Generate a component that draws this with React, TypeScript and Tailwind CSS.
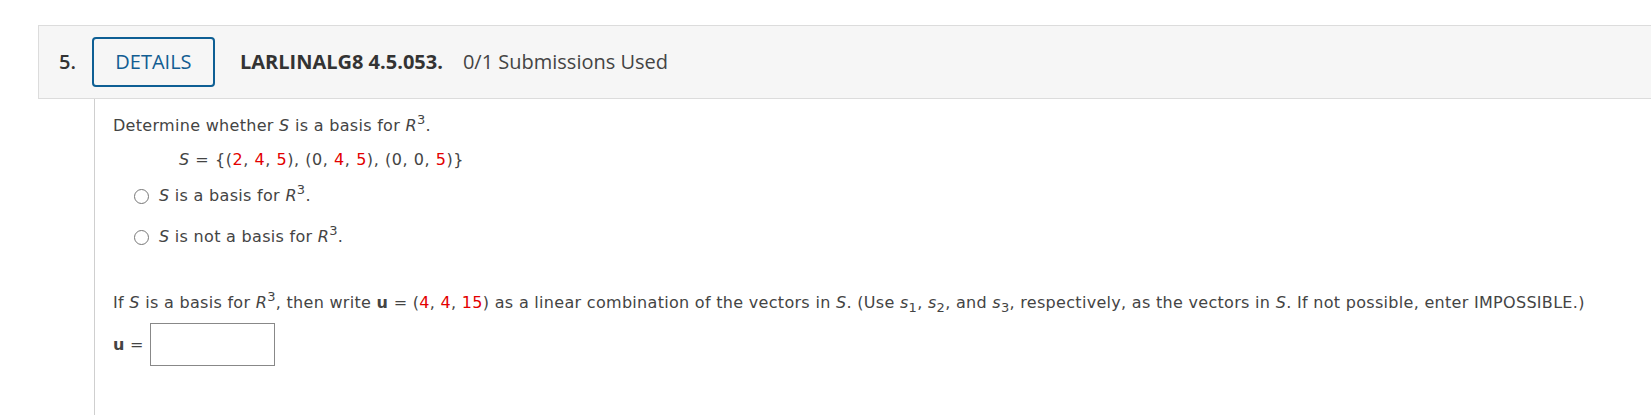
import React from "react";

const sans = "font-['Open_Sans','Noto_Sans',sans-serif]";
const body = "font-['DejaVu_Sans','Verdana',sans-serif]";

function R({ children }: { children: React.ReactNode }) {
  return <span className="text-[#e30000]">{children}</span>;
}

function I({ children }: { children: React.ReactNode }) {
  return <i>{children}</i>;
}

function R3() {
  return (
    <>
      <I>R</I>
      <sup className="relative -top-[7px] text-[13px]">3</sup>
    </>
  );
}

function Sub({ n }: { n: number }) {
  return (
    <>
      <I>s</I>
      <sub className="relative -bottom-[4px] text-[13px]">{n}</sub>
    </>
  );
}

function Radio({ children }: { children: React.ReactNode }) {
  return (
    <label className="flex items-center gap-[10px]">
      <span className="block h-[15px] w-[15px] rounded-full border border-[#777] bg-white" />
      <span>{children}</span>
    </label>
  );
}

export default function App() {
  return (
    <div className="min-h-[415px] bg-white pt-[25px] pl-[38px]">
      <div
        className={`${sans} flex h-[74px] items-center border border-r-0 border-[#dcdcdc] bg-[#f6f6f6] pl-[20px] text-[20px] text-[#333]`}
      >
        <span className="font-semibold">5.</span>
        <button className="ml-[16px] flex h-[50px] w-[123px] items-center justify-center rounded-[4px] border-2 border-[#0e5f94] text-[20px] font-medium text-[#125d92]">
          DETAILS
        </button>
        <span className="ml-[25px] font-bold text-[#333]">LARLINALG8 4.5.053.</span>
        <span className="ml-[20px] text-[#444]">0/1 Submissions Used</span>
      </div>

      <div
        className={`${body} ml-[56px] min-h-[320px] border-l border-[#cfcfcf] pl-[18px] pt-[17px] text-[16px] tracking-[0.3px] text-[#444]`}
      >
        <p className="leading-[20px]">
          Determine whether <I>S</I> is a basis for <R3 />.
        </p>
        <p className="mt-[14px] pl-[66px] leading-[20px] tracking-[0.55px]">
          <I>S</I> = {"{"}(<R>2</R>, <R>4</R>, <R>5</R>), (0, <R>4</R>, <R>5</R>), (0, 0, <R>5</R>){"}"}
        </p>
        <div className="mt-[16px] flex flex-col gap-[21px] pl-[21px] leading-[20px]">
          <Radio>
            <I>S</I> is a basis for <R3 />.
          </Radio>
          <Radio>
            <I>S</I> is not a basis for <R3 />.
          </Radio>
        </div>
        <p className="mt-[46px] leading-[20px]">
          If <I>S</I> is a basis for <R3 />, then write <b>u</b> = (<R>4</R>, <R>4</R>, <R>15</R>) as a linear
          combination of the vectors in <I>S</I>. (Use <Sub n={1} />, <Sub n={2} />, and <Sub n={3} />,
          respectively, as the vectors in <I>S</I>. If not possible, enter IMPOSSIBLE.)
        </p>
        <div className="mt-[10px] flex items-center gap-[6px]">
          <span>
            <b>u</b> =
          </span>
          <input className="h-[43px] w-[125px] border border-[#888] bg-white" />
        </div>
      </div>
    </div>
  );
}
